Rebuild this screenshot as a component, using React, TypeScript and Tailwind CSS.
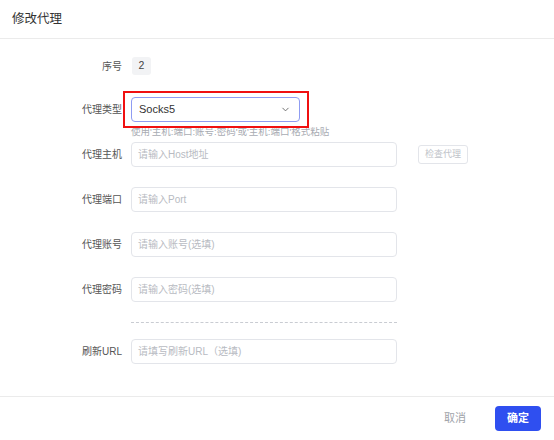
import { ChevronDown } from "lucide-react";

const font = { fontFamily: '"Liberation Sans", "Noto Sans CJK SC", sans-serif' };

function Label({ children }: { children: React.ReactNode }) {
  return (
    <div className="w-[131px] shrink-0 pr-[9px] text-right text-[10px] text-[#555]">
      {children}
    </div>
  );
}

function Field({ label, placeholder }: { label: string; placeholder: string }) {
  return (
    <div className="flex items-center">
      <Label>{label}</Label>
      <div className="flex h-[25px] w-[266px] items-center rounded-[4px] border border-[#e3e5ea] px-[6px] text-[10px] text-[#b8bbc2]">
        {placeholder}
      </div>
    </div>
  );
}

export default function App() {
  return (
    <div className="h-[440px] w-[554px] bg-white" style={font}>
      <div className="flex h-[39px] items-center border-b border-[#ebebeb] pl-[12px] text-[12.5px] text-[#333]">
        修改代理
      </div>

      <div className="h-[357px]">
        <div className="flex items-center pt-[18px]">
          <Label>序号</Label>
          <div className="ml-[1px] flex h-[18px] w-[19px] items-center justify-center rounded-[3px] bg-[#f2f3f5] text-[10.5px] text-[#444]">
            2
          </div>
        </div>

        <div className="relative mt-[22px] flex items-center">
          <Label>代理类型</Label>
          <div className="flex h-[25px] w-[169px] items-center justify-between rounded-[4px] border border-[#8f9cf2] pl-[7px] pr-[8px] text-[11px] text-[#333]">
            <span>Socks5</span>
            <ChevronDown size={11} strokeWidth={2} className="text-[#666]" />
          </div>
          <div className="absolute left-[123px] top-[-6px] h-[37px] w-[186px] border-2 border-[#f01010]" />
        </div>
        <div className="ml-[131px] mt-[3px] text-[9.5px] leading-[14px] text-[#a8abb2]">
          使用'主机:端口:账号:密码'或'主机:端口'格式粘贴
        </div>

        <div className="mt-[3px] flex items-center">
          <Field label="代理主机" placeholder="请输入Host地址" />
          <div className="ml-[21px] flex h-[19px] w-[50px] items-center justify-center rounded-[3px] border border-[#e3e5ea] text-[9px] text-[#c0c3c9]">
            检查代理
          </div>
        </div>

        <div className="mt-[20px]">
          <Field label="代理端口" placeholder="请输入Port" />
        </div>
        <div className="mt-[20px]">
          <Field label="代理账号" placeholder="请输入账号(选填)" />
        </div>
        <div className="mt-[20px]">
          <Field label="代理密码" placeholder="请输入密码(选填)" />
        </div>

        <div className="ml-[131px] mt-[20px] w-[266px] border-t border-dashed border-[#c9ccd2]" />

        <div className="mt-[16px]">
          <Field label="刷新URL" placeholder="请填写刷新URL（选填)" />
        </div>
      </div>

      <div className="flex h-[44px] items-center justify-end border-t border-[#ebebeb] pr-[13px]">
        <span className="mr-[29px] text-[11px] text-[#a0a3a9]">取消</span>
        <div className="flex h-[25px] w-[46px] items-center justify-center rounded-[4px] bg-[#2f4ff0] text-[11px] font-bold text-white">
          确定
        </div>
      </div>
    </div>
  );
}
